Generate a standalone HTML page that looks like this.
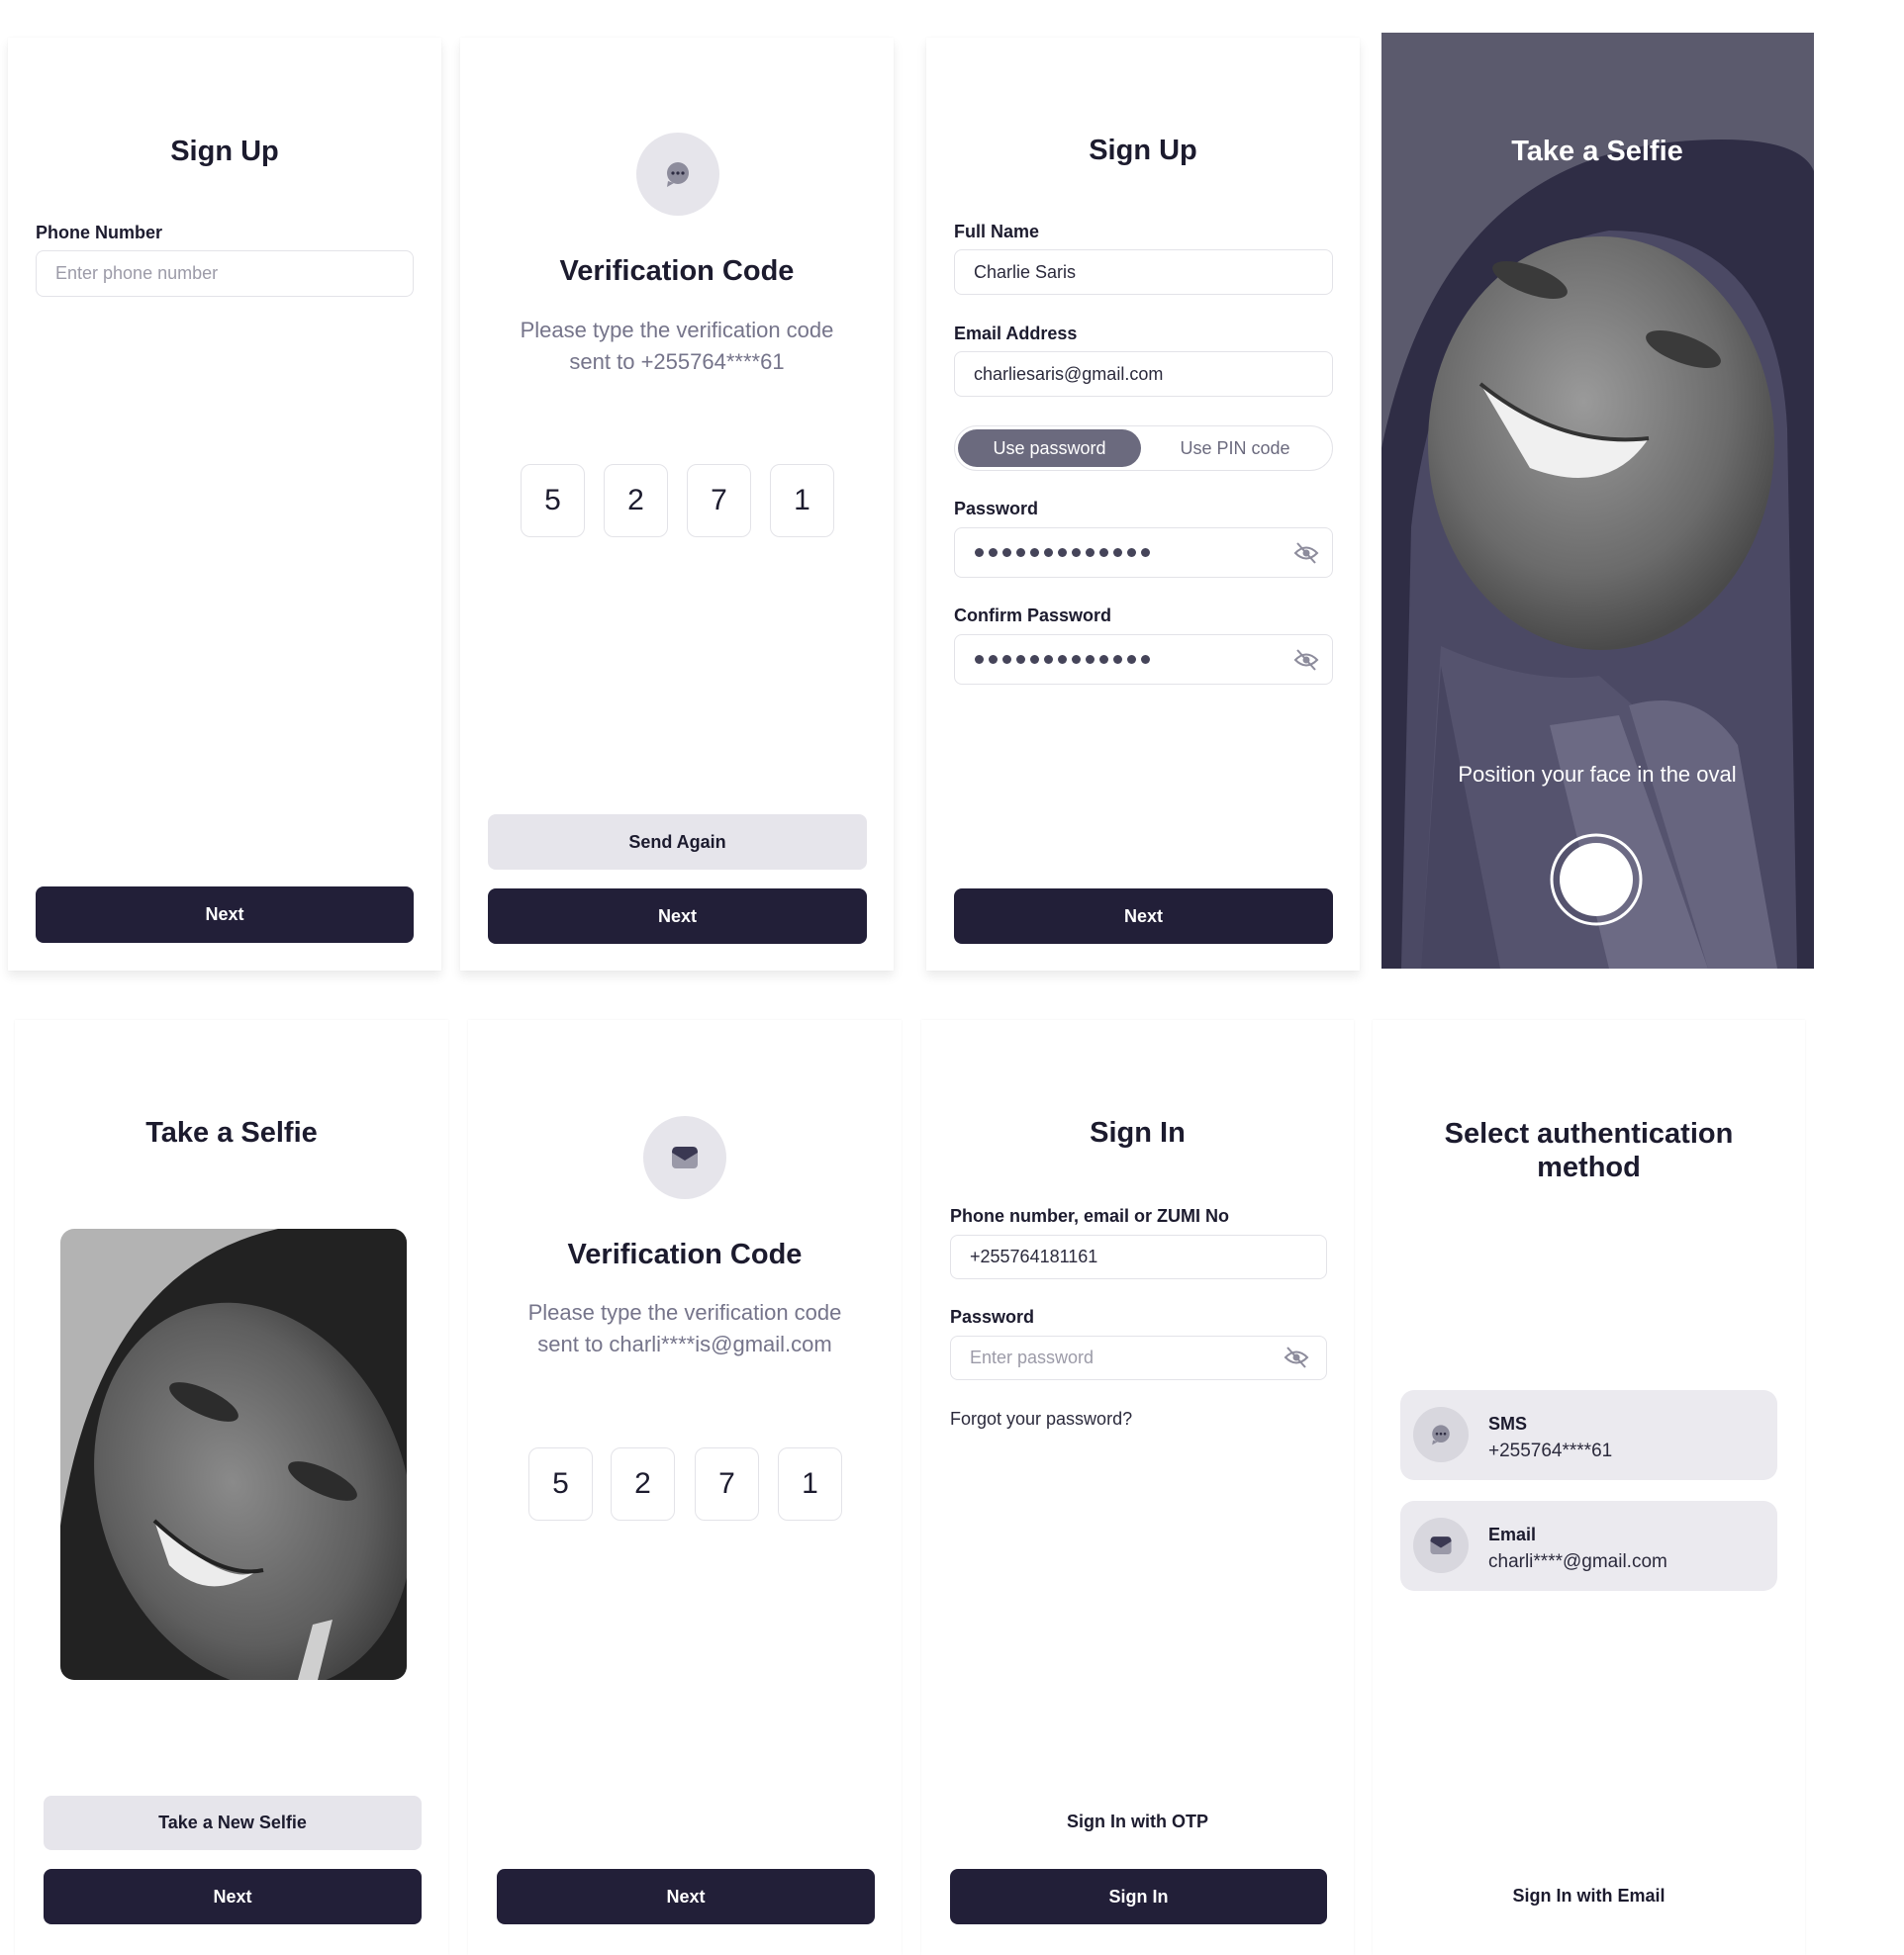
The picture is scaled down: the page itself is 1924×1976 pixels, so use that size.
<!DOCTYPE html>
<html><head><meta charset="utf-8"><style>
*{box-sizing:border-box;margin:0;padding:0}
body{width:1924px;height:1976px;background:#fff;position:relative;overflow:hidden;font-family:"Liberation Sans",sans-serif;color:#1c1b2e}
.a{position:absolute}
.card{position:absolute;background:#fff;box-shadow:0 6px 10px rgba(0,0,0,.08),0 0 2px rgba(0,0,0,.04)}
.card2{position:absolute;background:#fff;box-shadow:0 0 3px rgba(0,0,0,.05)}
.t{position:absolute;left:0;right:0;text-align:center;font-weight:bold;font-size:29px;color:#1c1b2e}
.lbl{position:absolute;font-weight:bold;font-size:18px;color:#1c1b2e}
.inp{position:absolute;border:1.5px solid #e3e3e8;border-radius:8px;font-size:18px;padding-left:19px;display:flex;align-items:center;color:#2b2a3c}
.ph{color:#9c9ba8}
.btn{position:absolute;background:#221f38;color:#fff;border-radius:8px;font-weight:bold;font-size:18px;display:flex;align-items:center;justify-content:center}
.btn2{position:absolute;background:#e6e5eb;color:#1c1b2e;border-radius:8px;font-weight:bold;font-size:18px;display:flex;align-items:center;justify-content:center}
.sub{position:absolute;left:0;right:0;text-align:center;font-size:22px;line-height:32px;color:#75748a}
.otp{position:absolute;width:65px;height:74px;border:1.5px solid #e3e3e8;border-radius:10px;font-size:30px;display:flex;align-items:center;justify-content:center;color:#1c1b2e}
.ic{position:absolute;border-radius:50%;background:#e6e5eb}
.dots{position:absolute;display:flex;gap:5px}
.dots i{width:9px;height:9px;border-radius:50%;background:#454459;display:block}
.opt{position:absolute;left:28px;width:381px;height:91px;background:#ebeaef;border-radius:14px}
</style></head><body>

<!-- Card 1 -->
<div class="card" style="left:8px;top:38px;width:438px;height:943px">
  <div class="t" style="top:99px">Sign Up</div>
  <div class="lbl" style="left:28px;top:187px">Phone Number</div>
  <div class="inp" style="left:28px;top:215px;width:382px;height:47px"><span class="ph">Enter phone number</span></div>
  <div class="btn" style="left:28px;top:858px;width:382px;height:57px">Next</div>
</div>

<!-- Card 2 -->
<div class="card" style="left:465px;top:38px;width:438px;height:943px">
  <div class="ic" style="left:178px;top:96px;width:84px;height:84px"></div>
  <svg class="a" style="left:205px;top:123px" width="30" height="30" viewBox="0 0 30 30"><circle cx="15" cy="14" r="11" fill="#8d8c9c"/><path d="M5 22 L4 28 L11 24Z" fill="#8d8c9c"/><circle cx="10" cy="14" r="1.6" fill="#2e2d42"/><circle cx="15" cy="14" r="1.6" fill="#2e2d42"/><circle cx="20" cy="14" r="1.6" fill="#2e2d42"/></svg>
  <div class="t" style="top:220px">Verification Code</div>
  <div class="sub" style="top:280px">Please type the verification code<br>sent to +255764****61</div>
  <div class="otp" style="left:61px;top:431px">5</div>
  <div class="otp" style="left:145px;top:431px">2</div>
  <div class="otp" style="left:229px;top:431px">7</div>
  <div class="otp" style="left:313px;top:431px">1</div>
  <div class="btn2" style="left:28px;top:785px;width:383px;height:56px">Send Again</div>
  <div class="btn" style="left:28px;top:860px;width:383px;height:56px">Next</div>
</div>

<!-- Card 3 -->
<div class="card" style="left:936px;top:38px;width:438px;height:943px">
  <div class="t" style="top:98px">Sign Up</div>
  <div class="lbl" style="left:28px;top:186px">Full Name</div>
  <div class="inp" style="left:28px;top:214px;width:383px;height:46px">Charlie Saris</div>
  <div class="lbl" style="left:28px;top:289px">Email Address</div>
  <div class="inp" style="left:28px;top:317px;width:383px;height:46px">charliesaris@gmail.com</div>
  <div class="a" style="left:28px;top:392px;width:383px;height:46px;border:1.5px solid #e3e3e8;border-radius:23px"></div>
  <div class="a" style="left:32px;top:396px;width:185px;height:38px;background:#6b6a7e;border-radius:19px;color:#fff;font-size:18px;display:flex;align-items:center;justify-content:center">Use password</div>
  <div class="a" style="left:217px;top:396px;width:190px;height:38px;color:#6b6a7e;font-size:18px;display:flex;align-items:center;justify-content:center">Use PIN code</div>
  <div class="lbl" style="left:28px;top:466px">Password</div>
  <div class="inp" style="left:28px;top:495px;width:383px;height:51px"></div>
  <div class="dots" style="left:49px;top:516px"><i></i><i></i><i></i><i></i><i></i><i></i><i></i><i></i><i></i><i></i><i></i><i></i><i></i></div>
  <svg class="a" style="left:371px;top:509px" width="26" height="24" viewBox="0 0 26 24"><path d="M2 12 Q13 1 24 12 Q13 23 2 12Z" fill="none" stroke="#8d8c9c" stroke-width="2"/><circle cx="13" cy="12" r="3.5" fill="#8d8c9c"/><path d="M4 2 L22 22" stroke="#8d8c9c" stroke-width="2"/></svg>
  <div class="lbl" style="left:28px;top:574px">Confirm Password</div>
  <div class="inp" style="left:28px;top:603px;width:383px;height:51px"></div>
  <div class="dots" style="left:49px;top:624px"><i></i><i></i><i></i><i></i><i></i><i></i><i></i><i></i><i></i><i></i><i></i><i></i><i></i></div>
  <svg class="a" style="left:371px;top:617px" width="26" height="24" viewBox="0 0 26 24"><path d="M2 12 Q13 1 24 12 Q13 23 2 12Z" fill="none" stroke="#8d8c9c" stroke-width="2"/><circle cx="13" cy="12" r="3.5" fill="#8d8c9c"/><path d="M4 2 L22 22" stroke="#8d8c9c" stroke-width="2"/></svg>
  <div class="btn" style="left:28px;top:860px;width:383px;height:56px">Next</div>
</div>

<!-- Card 4 selfie dark -->
<div class="a" style="left:1396px;top:33px;width:437px;height:946px;overflow:hidden;background:#5b5a6d">
  <svg width="437" height="946" viewBox="0 0 437 946">
    <path d="M0 420 Q60 130 300 110 Q420 100 437 140 L437 946 L0 946Z" fill="#2f2d45"/>
    <path d="M30 500 Q60 230 230 200 Q400 200 410 400 L420 946 L20 946Z" fill="#4b4964"/>
    <path d="M60 620 Q150 660 220 650 L300 720 L380 946 L40 946Z" fill="#55536e"/>
    <path d="M170 700 L240 690 L330 946 L230 946Z" fill="#6c6a84"/>
    <path d="M250 680 Q320 660 360 720 L400 946 L330 946Z" fill="#67657f"/>
    <path d="M60 640 L120 946 L40 946Z" fill="#474560"/>
    <defs><radialGradient id="f" cx="45%" cy="40%" r="60%"><stop offset="0" stop-color="#9a9a9a"/><stop offset="0.7" stop-color="#6b6b6b"/><stop offset="1" stop-color="#4a4a4a"/></radialGradient></defs>
    <ellipse cx="222" cy="415" rx="175" ry="209" fill="url(#f)"/>
    <path d="M100 355 Q180 420 270 410 Q230 470 150 440Z" fill="#f0f0f0"/>
    <path d="M100 355 Q180 420 270 410" fill="none" stroke="#333" stroke-width="4"/>
    <ellipse cx="150" cy="250" rx="40" ry="14" fill="#3a3a3a" transform="rotate(20 150 250)"/>
    <ellipse cx="305" cy="320" rx="40" ry="14" fill="#3a3a3a" transform="rotate(20 305 320)"/>
    <text x="218" y="129" text-anchor="middle" font-family="Liberation Sans" font-weight="bold" font-size="29" fill="#fff">Take a Selfie</text>
    <text x="218" y="757" text-anchor="middle" font-family="Liberation Sans" font-size="22" fill="#fff">Position your face in the oval</text>
    <circle cx="217" cy="856" r="45" fill="none" stroke="#fff" stroke-width="3"/>
    <circle cx="217" cy="856" r="37" fill="#fff"/>
  </svg>
</div>

<!-- Card 5 -->
<div class="card2" style="left:15px;top:1031px;width:438px;height:945px">
  <div class="t" style="top:98px">Take a Selfie</div>
  <div class="a" style="left:46px;top:211px;width:350px;height:456px;border-radius:14px;overflow:hidden;background:#b3b3b3">
    <svg width="350" height="456" viewBox="0 0 350 456">
      <defs><radialGradient id="g" cx="45%" cy="45%" r="60%"><stop offset="0" stop-color="#8a8a8a"/><stop offset="0.7" stop-color="#5e5e5e"/><stop offset="1" stop-color="#3c3c3c"/></radialGradient></defs>
      <path d="M0 456 L0 300 Q40 40 220 0 L350 0 L350 456Z" fill="#222"/>
      <ellipse cx="195" cy="270" rx="155" ry="200" fill="url(#g)" transform="rotate(-20 195 270)"/>
      <path d="M95 295 Q170 365 200 345 Q150 380 110 340Z" fill="#ececec"/>
      <path d="M95 295 Q160 355 205 345" fill="none" stroke="#222" stroke-width="4"/>
      <ellipse cx="145" cy="175" rx="38" ry="13" fill="#2c2c2c" transform="rotate(25 145 175)"/>
      <ellipse cx="265" cy="255" rx="38" ry="13" fill="#2c2c2c" transform="rotate(25 265 255)"/>
      <path d="M255 400 L275 395 L260 456 L240 456Z" fill="#cfcfcf"/>
    </svg>
  </div>
  <div class="btn2" style="left:29px;top:784px;width:382px;height:55px">Take a New Selfie</div>
  <div class="btn" style="left:29px;top:858px;width:382px;height:56px">Next</div>
</div>

<!-- Card 6 -->
<div class="card2" style="left:473px;top:1031px;width:438px;height:945px">
  <div class="ic" style="left:177px;top:97px;width:84px;height:84px"></div>
  <svg class="a" style="left:203px;top:124px" width="32" height="30" viewBox="0 0 32 30"><rect x="3" y="6" width="26" height="20" rx="4" fill="#9a99a8"/><path d="M3 10 Q3 4 8 4 L24 4 Q29 4 29 10 L16 18Z" fill="#3a3852"/></svg>
  <div class="t" style="top:221px">Verification Code</div>
  <div class="sub" style="top:280px">Please type the verification code<br>sent to charli****is@gmail.com</div>
  <div class="otp" style="left:61px;top:432px">5</div>
  <div class="otp" style="left:144px;top:432px">2</div>
  <div class="otp" style="left:229px;top:432px">7</div>
  <div class="otp" style="left:313px;top:432px">1</div>
  <div class="btn" style="left:29px;top:858px;width:382px;height:56px">Next</div>
</div>

<!-- Card 7 -->
<div class="card2" style="left:931px;top:1031px;width:437px;height:945px">
  <div class="t" style="top:98px">Sign In</div>
  <div class="lbl" style="left:29px;top:188px">Phone number, email or ZUMI No</div>
  <div class="inp" style="left:29px;top:217px;width:381px;height:45px">+255764181161</div>
  <div class="lbl" style="left:29px;top:290px">Password</div>
  <div class="inp" style="left:29px;top:319px;width:381px;height:45px"><span class="ph">Enter password</span></div>
  <svg class="a" style="left:366px;top:329px" width="26" height="24" viewBox="0 0 26 24"><path d="M2 12 Q13 1 24 12 Q13 23 2 12Z" fill="none" stroke="#8d8c9c" stroke-width="2"/><circle cx="13" cy="12" r="3.5" fill="#8d8c9c"/><path d="M4 2 L22 22" stroke="#8d8c9c" stroke-width="2"/></svg>
  <div class="a" style="left:29px;top:393px;font-size:18px;color:#2b2a3c">Forgot your password?</div>
  <div class="a" style="left:0;right:0;top:800px;text-align:center;font-weight:bold;font-size:18px">Sign In with OTP</div>
  <div class="btn" style="left:29px;top:858px;width:381px;height:56px">Sign In</div>
</div>

<!-- Card 8 -->
<div class="card2" style="left:1387px;top:1031px;width:437px;height:945px">
  <div class="t" style="top:98px;line-height:34px">Select authentication<br>method</div>
  <div class="opt" style="top:374px"></div>
  <div class="ic" style="left:41px;top:391px;width:56px;height:56px;background:#d8d7de"></div>
  <svg class="a" style="left:57px;top:407px" width="24" height="24" viewBox="0 0 30 30"><circle cx="15" cy="14" r="11" fill="#8d8c9c"/><path d="M5 22 L4 28 L11 24Z" fill="#8d8c9c"/><circle cx="10" cy="14" r="1.6" fill="#2e2d42"/><circle cx="15" cy="14" r="1.6" fill="#2e2d42"/><circle cx="20" cy="14" r="1.6" fill="#2e2d42"/></svg>
  <div class="a" style="left:117px;top:398px;font-weight:bold;font-size:18px">SMS</div>
  <div class="a" style="left:117px;top:425px;font-size:19px;color:#2b2a3c">+255764****61</div>
  <div class="opt" style="top:486px"></div>
  <div class="ic" style="left:41px;top:503px;width:56px;height:56px;background:#d8d7de"></div>
  <svg class="a" style="left:56px;top:518px" width="26" height="26" viewBox="0 0 32 30"><rect x="3" y="6" width="26" height="20" rx="4" fill="#9a99a8"/><path d="M3 10 Q3 4 8 4 L24 4 Q29 4 29 10 L16 18Z" fill="#3a3852"/></svg>
  <div class="a" style="left:117px;top:510px;font-weight:bold;font-size:18px">Email</div>
  <div class="a" style="left:117px;top:537px;font-size:19px;color:#2b2a3c">charli****@gmail.com</div>
  <div class="a" style="left:0;right:0;top:875px;text-align:center;font-weight:bold;font-size:18px">Sign In with Email</div>
</div>

</body></html>
